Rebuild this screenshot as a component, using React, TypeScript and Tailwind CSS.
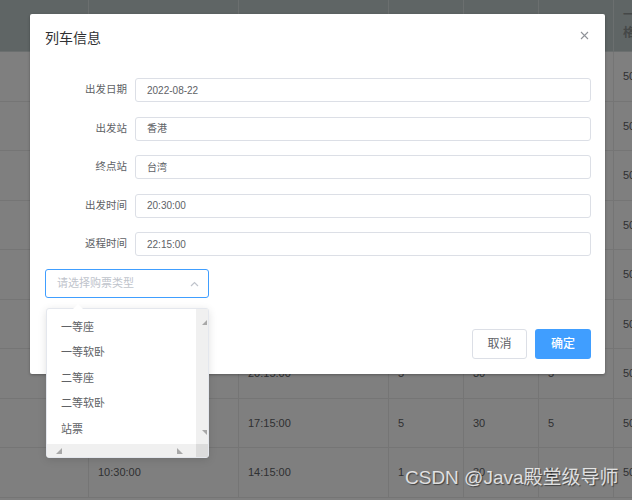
import React from "react";

const cols = ["w-[89px]", "w-[150px]", "w-[150px]", "w-[75px]", "w-[75px]", "w-[75px]", "w-[90px]"];

const rows: string[][] = [
  ["", "08:00:00", "12:30:00", "3", "30", "3", "500"],
  ["", "09:15:00", "13:00:00", "2", "30", "2", "500"],
  ["", "10:00:00", "15:20:00", "4", "30", "4", "500"],
  ["", "11:30:00", "16:45:00", "5", "30", "5", "500"],
  ["", "13:00:00", "18:10:00", "2", "30", "2", "500"],
  ["", "14:20:00", "19:00:00", "3", "30", "3", "500"],
  ["", "15:40:00", "20:15:00", "5", "30", "5", "500"],
  ["", "12:00:00", "17:15:00", "5", "30", "5", "500"],
  ["", "10:30:00", "14:15:00", "1", "30", "1", "500"],
];

const fields = [
  ["出发日期", "2022-08-22"],
  ["出发站", "香港"],
  ["终点站", "台湾"],
  ["出发时间", "20:30:00"],
  ["返程时间", "22:15:00"],
];

const options = ["一等座", "一等软卧", "二等座", "二等软卧", "站票"];

function Tri({ points }: { points: string }) {
  return (
    <svg width="6" height="6" viewBox="0 0 6 6">
      <polygon points={points} fill="#a8a8a8" />
    </svg>
  );
}

export default function App() {
  return (
    <div className="relative w-[632px] h-[500px] overflow-hidden bg-white font-['Liberation_Sans','Noto_Sans_CJK_SC',sans-serif]">
      {/* table behind the dialog */}
      <div className="flex flex-col text-[11px] text-[#606266]">
        <div className="flex h-[52px] bg-[#becbcb] border-b border-[#d6dede]">
          {cols.map((w, i) => (
            <div key={i} className={`${w} shrink-0 border-r border-[#d6dede] pl-[9px] pt-[6px] leading-[18px] font-bold text-[#8a9090] text-[12px]`}>
              {i === 6 ? (
                <>
                  一等座价
                  <br />格
                </>
              ) : null}
            </div>
          ))}
        </div>
        {rows.map((r, ri) => (
          <div key={ri} className="flex h-[49.5px] border-b border-[#ebebeb]">
            {r.map((c, ci) => (
              <div key={ci} className={`${cols[ci]} shrink-0 border-r border-[#ebebeb] pl-[9px] flex items-center`}>
                {c}
              </div>
            ))}
          </div>
        ))}
      </div>

      {/* modal mask */}
      <div className="absolute inset-0 bg-black/50" />

      {/* dialog */}
      <div className="absolute left-[30px] top-[14px] w-[575px] h-[360px] bg-white rounded-[2px] shadow-[0_1px_3px_rgba(0,0,0,0.3)] flex flex-col">
        <div className="pt-[14px] pl-[15px] text-[14px] leading-[20px] text-[#303133]">列车信息</div>
        <svg className="absolute right-[16px] top-[17px]" width="9" height="9" viewBox="0 0 9 9">
          <path d="M1 1L8 8M8 1L1 8" stroke="#909399" strokeWidth="1.1" />
        </svg>

        <div className="mt-[30px] flex flex-col gap-[14.5px] pr-[14px]">
          {fields.map(([label, value]) => (
            <div key={label} className="flex items-center h-[24px]">
              <div className="w-[105px] shrink-0 pr-[8px] text-right text-[10.5px] text-[#606266]">{label}</div>
              <div className="flex-1 h-[24px] border border-[#dcdfe6] rounded-[3px] pl-[11px] flex items-center text-[10px] text-[#606266]">
                {value}
              </div>
            </div>
          ))}
        </div>

        <div className="ml-[15px] mt-[13px] w-[164px] h-[29px] border border-[#409eff] rounded-[3px] flex items-center justify-between pl-[11px] pr-[9px]">
          <span className="text-[11px] text-[#c0c4cc]">请选择购票类型</span>
          <svg width="9" height="6" viewBox="0 0 9 6">
            <path d="M1 5L4.5 1.5L8 5" stroke="#c0c4cc" strokeWidth="1.2" fill="none" />
          </svg>
        </div>

        <div className="mt-auto mb-[15px] mr-[14px] flex justify-end gap-[8px]">
          <button className="w-[55px] h-[30px] border border-[#dcdfe6] rounded-[3px] text-[12px] text-[#606266] bg-white">
            取消
          </button>
          <button className="w-[56px] h-[30px] rounded-[3px] text-[12px] font-medium text-white bg-[#409eff]">
            确定
          </button>
        </div>
      </div>

      {/* select dropdown */}
      <div className="absolute left-[46px] top-[308px] w-[163px] h-[150px] bg-white border border-[#e4e7ed] rounded-[3px] shadow-[0_2px_8px_rgba(0,0,0,0.12)] flex flex-col">
        <div className="absolute left-[26px] -top-[5px] w-0 h-0 border-l-[5px] border-r-[5px] border-b-[5px] border-l-transparent border-r-transparent border-b-white" />
        <div className="flex flex-1 min-h-0">
          <div className="flex-1 pt-[5px] flex flex-col">
            {options.map((o) => (
              <div key={o} className="h-[25.5px] pl-[14px] flex items-center text-[11px] text-[#606266]">
                {o}
              </div>
            ))}
          </div>
          <div className="w-[12px] bg-[#f0f0f0] flex flex-col justify-between items-end pt-[11px] pb-[9px] pr-[1px]">
            <Tri points="6,0 6,5 1,5" />
            <Tri points="1,1 6,1 6,6" />
          </div>
        </div>
        <div className="h-[13px] flex">
          <div className="flex-1 bg-[#f0f0f0] flex items-end justify-between pl-[9px] pr-[13px] pb-[3px]">
            <Tri points="6,0 6,6 0,6" />
            <Tri points="0,0 6,6 0,6" />
          </div>
          <div className="w-[12px] bg-[#dcdcdc]" />
        </div>
      </div>

      {/* watermark */}
      <div className="absolute left-[405px] top-[467px] text-[19px] leading-[22px] text-white/80 [text-shadow:1px_1px_1px_rgba(0,0,0,0.5)] whitespace-nowrap">
        CSDN @Java殿堂级导师
      </div>
    </div>
  );
}
